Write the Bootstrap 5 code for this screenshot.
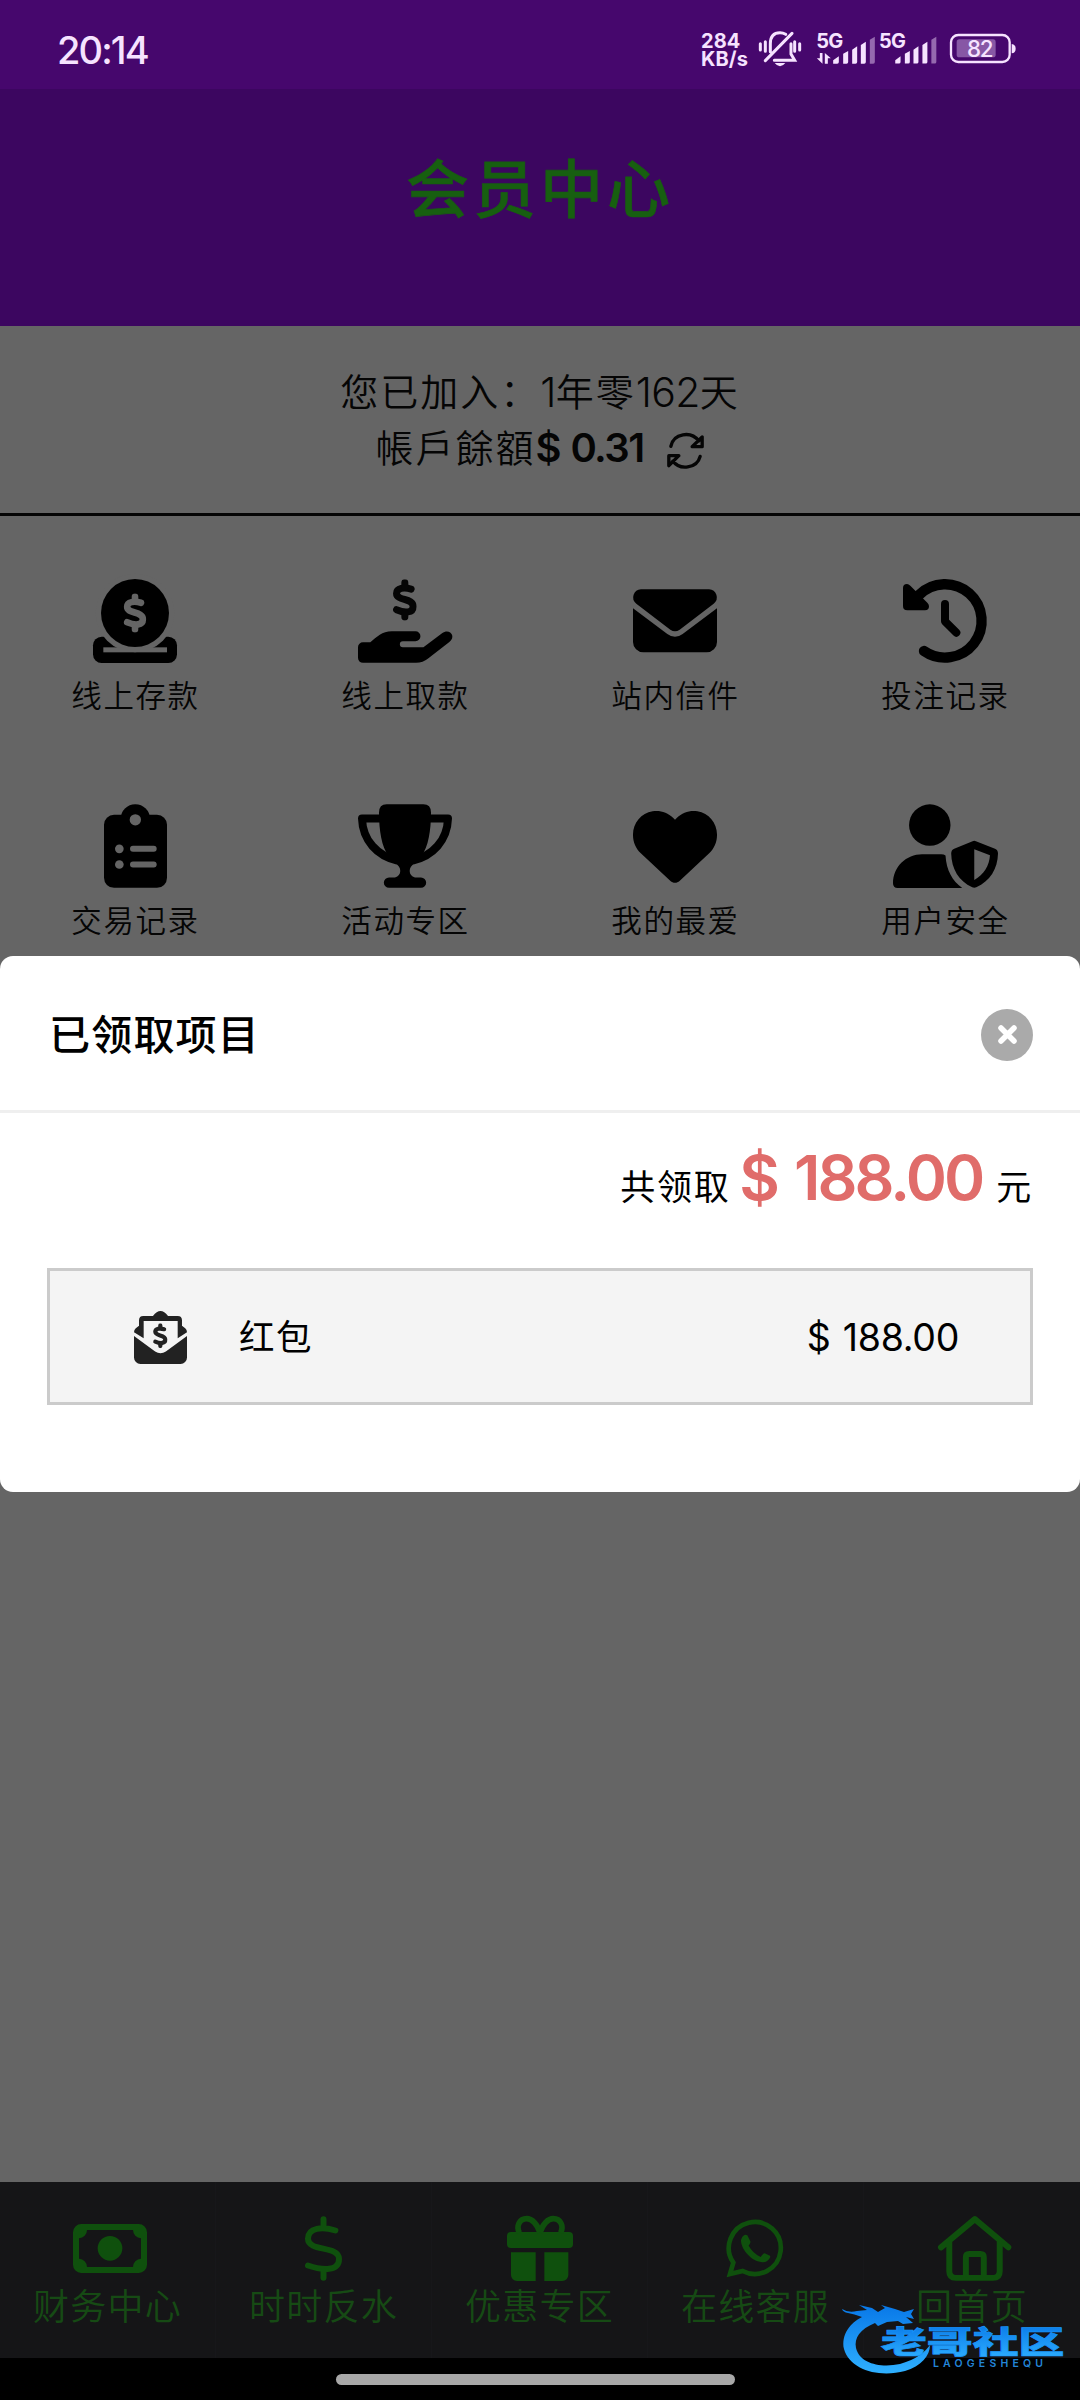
<!DOCTYPE html>
<html lang="zh-CN">
<head>
<meta charset="utf-8">
<meta name="viewport" content="width=device-width, initial-scale=1">
<title>会员中心</title>
<link href="https://cdn.jsdelivr.net/npm/bootstrap@5.3.0/dist/css/bootstrap.min.css" rel="stylesheet">
<style>
body{background:#656565;color:#050505;font-family:Inter,"Noto Sans CJK SC",sans-serif;font-weight:350;line-height:1}
svg{display:block;flex:none;overflow:visible}
.phone{width:1080px;height:2400px;overflow:hidden}
.statusbar{height:89px;background:#46076d;color:#f6e3ff;padding:0 64px 8px 57px}
.clock{font-size:38px;font-weight:500;letter-spacing:-1.9px;padding-top:18px}
.netspeed{font-size:20px;line-height:18px;font-weight:700;width:58px;letter-spacing:.1px;padding-top:2px}
.hero{height:237px;background:#3c0660;color:#175f10;padding-top:68px}
.hero h1{font-size:63px;font-weight:500;letter-spacing:4px;line-height:64px;-webkit-text-stroke:.6px #175f10}
.account{height:190px;border-bottom:3px solid #050505;font-size:38px;letter-spacing:2px;padding-top:38px}
.account .line{height:56px}
.account .num{font-size:41px;letter-spacing:-.7px}
.account .amount{font-size:40px;font-weight:600;letter-spacing:-1.6px;word-spacing:2px}
.refresh{margin:5px 0 0 24px}
.shortcuts{padding-top:63px}
.tile{height:225px}
.tile span{font-size:30.5px;letter-spacing:1.6px;line-height:36px;margin:15px 0 0 1px}
.cut{fill:#656565;color:#656565}
.sheet{top:956px;left:0;height:536px;background:#fff;border-radius:13px;color:#000}
.sheet-head{height:157px;border-bottom:3px solid #efefef;padding:3px 47px 0 49px}
.sheet-head h2{font-size:41px;font-weight:500;letter-spacing:1.2px;padding-top:2px}
.shut{width:52px;height:52px;background:#aaa;border-radius:50%}
.total{height:82px;padding:0 47px 0 0;margin-top:32px;font-size:35px;letter-spacing:1.7px;font-weight:400}
.total b{font-size:62.5px;line-height:64px;font-weight:600;color:#e06c6a;letter-spacing:-2.9px;word-spacing:4px;margin:0 14px 0 9px}
.claim{margin:41px 47px 0 47px;height:137px;background:#f4f4f4;border:3px solid #cbcbcb;padding:2px 71px 0 84px;font-size:35.5px;letter-spacing:1.5px;font-weight:400}
.claim .sum{font-size:37.5px;letter-spacing:-.3px;word-spacing:2px}
.tabs{height:176px;background:#151517;color:#0f500d}
.tab{padding-top:34px;width:216px;border-right:1px solid #17171a}
.tab:last-child{border:0}
.tab span{font-size:36px;letter-spacing:1.3px;line-height:40px;color:#164a14;margin-top:6px}
.gesture{height:42px;background:#000;padding:16px 9px 0 0}
.gesture i{width:399px;height:11px;border-radius:6px;background:#a8a8a8}
.watermark{left:842px;top:2300px}
</style>
</head>
<body>
<svg width="0" height="0" class="position-absolute">
  <symbol id="dollar" viewBox="0 0 72 125"><g fill="none" stroke="currentColor" stroke-width="21" stroke-linecap="round" stroke-linejoin="round"><path d="M55 30C34 24 11 26 11 43C11 66 61 56 61 82C61 102 36 103 11 92"/><path d="M36 11V24M36 102V114"/></g></symbol>
</svg>
<div class="phone position-relative d-flex flex-column">
  <header class="statusbar d-flex align-items-center justify-content-between">
    <div class="clock">20:14</div>
    <div class="d-flex align-items-center pt-3">
      <div class="netspeed d-flex flex-column"><span>284</span><span>KB/s</span></div>
      <svg class="me-3" width="42" height="36" viewBox="300 96 126 108" fill="none" stroke="currentColor" stroke-width="9" stroke-linecap="round"><path d="M334 158V134Q334 101 363 101Q372 101 380 106M346 184H407L396 165V134M319 185L399 103M304 134V153M319 128V157M407 128V157M422 134V153"/><path d="M347 192H379Q363 212 347 192" fill="currentColor" stroke="none"/></svg>
      <svg width="59" height="32" viewBox="467 98 176 96" fill="currentColor"><text x="464" y="144" font-size="60" font-weight="700" letter-spacing="-2">5G</text><path d="M515 190V180L532 168V185Q532 190 527 190ZM545 190V160L560 152V185Q560 190 555 190ZM572 190V148L587 138V185Q587 190 582 190ZM598 190V134L613 124V185Q613 190 608 190Z"/><path d="M625 190V118L640 109V185Q640 190 635 190Z" opacity=".45"/><path d="M483 158V190L466 174H475V158ZM490 190V158L508 174H499V190Z"/></svg>
      <svg class="ms-1" width="57" height="32" viewBox="659 98 172 96" fill="currentColor"><text x="656" y="144" font-size="60" font-weight="700" letter-spacing="-2">5G</text><path d="M705 190V180L721 168V185Q721 190 716 190ZM734 190V160L749 152V185Q749 190 744 190ZM760 190V148L775 138V185Q775 190 770 190ZM787 190V134L802 124V185Q802 190 797 190Z"/><path d="M814 190V118L829 109V185Q829 190 824 190Z" opacity=".45"/></svg>
      <svg style="margin-left:13px" width="66" height="29" viewBox="868 105 198 87"><rect x="871" y="108" width="176" height="81" rx="22" fill="none" stroke="currentColor" stroke-width="7"/><rect x="888" y="121" width="117" height="54" rx="8" fill="#8757a5"/><path d="M1053 135Q1065 137 1065 149Q1065 161 1053 163Z" fill="currentColor"/><text x="957" y="174" font-size="67" text-anchor="middle" font-weight="500" letter-spacing="-4" fill="currentColor">82</text></svg>
    </div>
  </header>
  <section class="hero text-center"><h1 class="m-0">会员中心</h1></section>

  <section class="account d-flex flex-column align-items-center">
    <div class="line d-flex align-items-center"><span>您已加入：</span><span class="num">1</span><span>年零</span><span class="num">162</span><span>天</span></div>
    <div class="line d-flex align-items-center"><span lang="zh-TW">帳戶餘額</span><span class="amount">$ 0.31</span>
      <svg class="refresh" width="37" height="34" viewBox="1103 285 110 102" fill="none" stroke="currentColor" stroke-width="10" stroke-linecap="round" stroke-linejoin="round"><path d="M1114 322C1122 282 1175 275 1198 306M1208 294V323H1178ZM1202 352C1192 390 1140 394 1120 366M1108 380V350H1138Z"/></svg>
    </div>
  </section>

  <main class="shortcuts flex-grow-1">
    <div class="row g-0">
      <div class="col-3 tile d-flex flex-column align-items-center"><svg width="84" height="84" viewBox="159 86 252 252"><rect x="159" y="259" width="252" height="79" rx="26"/><circle class="cut" cx="285" cy="188" r="118"/><rect class="cut" x="190" y="291" width="191" height="15"/><circle cx="285" cy="188" r="102"/><use class="cut" href="#dollar" x="250" y="129" width="70" height="118"/></svg><span>线上存款</span></div>
      <div class="col-3 tile d-flex flex-column align-items-center"><svg width="94" height="84" viewBox="953 86 283 252"><use href="#dollar" x="1058" y="86" width="72" height="125"/><path d="M968 276H990C1010 260 1025 243 1055 243H1126a15 15 0 0 1 0 30H1088a9 9 0 0 0 0 18H1150L1206 249C1228 232 1250 258 1228 275L1165 324Q1148 338 1128 338H968a15 15 0 0 1-15-15V291a15 15 0 0 1 15-15z"/></svg><span>线上取款</span></div>
      <div class="col-3 tile d-flex flex-column align-items-center"><svg width="84" height="84" viewBox="189 86 252 252"><path d="M213 117H417a24 24 0 0 1 14 43L329 238q-14 9-28 0L199 160a24 24 0 0 1 14-43zM189 174L292 251q23 17 46 0L441 174V275a31 31 0 0 1-31 31H220a31 31 0 0 1-31-31z"/></svg><span>站内信件</span></div>
      <div class="col-3 tile d-flex flex-column align-items-center"><svg width="84" height="84" viewBox="999 86 252 252"><path d="M1047 134A110 110 0 1 1 1062 302" fill="none" stroke="#000" stroke-width="31" stroke-linecap="round"/><path d="M999 113q0-12 12-12q5 0 10 5L1072 157q5 5 5 11q0 12-12 12H1012q-13 0-13-13z"/><path d="M1125 161V213L1159 247" fill="none" stroke="#000" stroke-width="24" stroke-linecap="round" stroke-linejoin="round"/></svg><span>投注记录</span></div>
      <div class="col-3 tile d-flex flex-column align-items-center"><svg width="63" height="84" viewBox="191 71 189 251"><rect x="191" y="103" width="189" height="219" rx="30"/><circle cx="285" cy="115" r="44"/><g class="cut"><circle cx="285" cy="118" r="17"/><circle cx="237" cy="205" r="13"/><circle cx="237" cy="252" r="13"/><rect x="269" y="196" width="80" height="18" rx="9"/><rect x="269" y="243" width="80" height="18" rx="9"/></g></svg><span>交易记录</span></div>
      <div class="col-3 tile d-flex flex-column align-items-center"><svg width="94" height="84" viewBox="954 71 282 251"><path d="M1040 71H1150q23 0 23 25C1173 150 1165 200 1145 225Q1135 246 1124 249C1104 258 1104 286 1125 291H1143a15 15 0 0 1 0 31H1047a15 15 0 0 1 0-31H1065C1086 286 1086 258 1066 249Q1055 246 1045 225C1025 200 1017 150 1017 96q0-25 23-25z"/><path d="M1022 114H966C968 180 1012 226 1072 240M1168 114H1224C1222 180 1178 226 1118 240" fill="none" stroke="#000" stroke-width="24" stroke-linejoin="round"/></svg><span>活动专区</span></div>
      <div class="col-3 tile d-flex flex-column align-items-center"><svg width="84" height="84" viewBox="0 0 512 512"><path d="M47.6 300.4L228.3 469.1c7.5 7 17.4 10.9 27.7 10.9s20.2-3.9 27.7-10.9L464.4 300.4c30.4-28.3 47.6-68 47.6-109.5v-5.8c0-69.9-50.5-129.5-119.4-141C347 36.5 300.6 51.4 268 84L256 96 244 84c-32.6-32.6-79-47.5-124.6-39.9C50.5 55.6 0 115.2 0 185.1v5.8c0 41.5 17.2 81.2 47.6 109.5z"/></svg><span>我的最爱</span></div>
      <div class="col-3 tile d-flex flex-column align-items-center"><svg width="105" height="84" viewBox="968 71 314 251"><circle cx="1078" cy="134" r="62"/><path d="M968 308C968 258 1008 221 1055 221H1112q8 0 13 4C1128 270 1145 300 1175 322H982q-14 0-14-14z"/><path fill-rule="evenodd" d="M1206 182q5-2 10 0l57 23q9 4 9 14C1281 265 1258 302 1217 320q-6 2-12 0C1165 302 1143 265 1142 219q0-10 9-14zM1211 206V298C1240 282 1256 255 1258 224z"/></svg><span>用户安全</span></div>
    </div>
  </main>

  <nav class="tabs d-flex">
    <div class="tab d-flex flex-column align-items-center"><svg class="ms-1" width="74" height="65" viewBox="222 168 222 195" fill="currentColor"><path fill-rule="evenodd" d="M247 192H419a25 25 0 0 1 25 25V314a25 25 0 0 1-25 25H247a25 25 0 0 1-25-25V217a25 25 0 0 1 25-25zM264 210a25 25 0 0 1-24 25V296a25 25 0 0 1 24 25H402a25 25 0 0 1 24-25V235a25 25 0 0 1-24-25z"/><circle cx="333" cy="265" r="37"/></svg><span>财务中心</span></div>
    <div class="tab d-flex flex-column align-items-center"><svg width="37" height="65" viewBox="912 168 112 195" fill="none" stroke="currentColor" stroke-width="18" stroke-linecap="round"><path d="M1004 211C965 199 921 201 921 236C921 276 1015 256 1015 297C1015 335 965 332 921 317M968 177V195M968 337V354"/></svg><span>时时反水</span></div>
    <div class="tab d-flex flex-column align-items-center"><svg width="66" height="65" viewBox="227 168 198 195" fill="currentColor"><rect x="227" y="216" width="198" height="48" rx="12"/><path d="M239 277H313V363H257a18 18 0 0 1-18-18zM339 277H411V345a18 18 0 0 1-18 18H339z"/><path d="M326 218C318 192 302 176 286 176C264 176 254 198 264 218M326 218C334 192 350 176 366 176C388 176 398 198 388 218" fill="none" stroke="currentColor" stroke-width="17"/></svg><span>优惠专区</span></div>
    <div class="tab d-flex flex-column align-items-center"><svg width="57" height="65" viewBox="889 168 171 195" fill="none" stroke="currentColor" stroke-width="14"><path d="M898 342L908 308A78 78 0 1 1 936 333Z"/><path fill="currentColor" stroke="none" d="M940 226q5-3 10 0l9 18q2 5-5 13q12 22 36 34q6-10 12-11l16 7q2 4-1 8q-10 15-26 11C955 300 930 262 931 240q1-9 9-14z"/></svg><span>在线客服</span></div>
    <div class="tab d-flex flex-column align-items-center"><svg class="ms-1" width="73" height="65" viewBox="414 168 220 195" fill="none" stroke="currentColor" stroke-width="18" stroke-linecap="round" stroke-linejoin="round"><path d="M423 262L525 177L626 262M448 245V334q0 20 20 20H580q20 0 20-20V245M498 350V292q0-10 10-10H542q10 0 10 10V350"/></svg><span>回首页</span></div>
  </nav>
  <div class="gesture d-flex justify-content-center"><i></i></div>

  <section class="sheet position-absolute w-100">
    <div class="sheet-head d-flex align-items-center justify-content-between"><h2 class="m-0">已领取项目</h2>
      <div class="shut d-flex align-items-center justify-content-center"><svg width="19" height="19" viewBox="0 0 19 19" stroke="#fff" stroke-width="5.5" stroke-linecap="round"><path d="M3 3L16 16M16 3L3 16"/></svg></div></div>
    <div class="total d-flex align-items-baseline justify-content-end"><span>共领取</span><b>$ 188.00</b><span>元</span></div>
    <div class="claim d-flex align-items-center"><svg width="53" height="53" viewBox="375 1042 148 148" fill="#222"><path d="M428 1056Q449 1028 470 1056H497q12 0 12 12V1083l9 7q5 4 5 11L497 1118V1070H402V1118L375 1101q0-7 5-11l9-7V1068q0-12 12-12z"/><path d="M375 1112L434 1155q15 10 30 0L523 1112V1172a18 18 0 0 1-18 18H393a18 18 0 0 1-18-18z"/><use href="#dollar" color="#222" x="428" y="1076" width="41" height="70"/></svg><span class="ms-5 ps-1">红包</span><span class="sum ms-auto">$ 188.00</span></div>
  </section>

  <svg class="watermark position-absolute" width="222" height="76" viewBox="0 0 222 76">
    <defs><linearGradient id="sky" x1="0" y1="0" x2="0" y2="1"><stop offset="0" stop-color="#0878e8"/><stop offset="1" stop-color="#2fb0ff"/></linearGradient></defs>
    <path fill="url(#sky)" d="M0 9Q6 13 15 11L25 10L17 5L30 8L36 12L43 8L39 5L53 9L62 12L72 9L69 14L72 19L64 17L71 23L61 24L56 21L45 22L36 26L33 23C18 29 12 38 14 48C18 64 39 68 58 64C75 59 83 52 88 45C88 56 79 66 63 71C37 78 8 70 2 49C-1 35 8 23 20 17Q12 14 6 13Q1 12 0 9Z"/>
    <text transform="translate(39 53) scale(1.48 1)" font-size="31" font-weight="900" fill="url(#sky)" stroke="#1994f8" stroke-width=".7">老哥社区</text>
    <text x="91" y="67" font-size="10.5" font-weight="600" textLength="110" fill="#2385d8">LAOGESHEQU</text>
  </svg>
</div>
<script src="https://cdn.jsdelivr.net/npm/bootstrap@5.3.0/dist/js/bootstrap.bundle.min.js"></script>
</body>
</html>
